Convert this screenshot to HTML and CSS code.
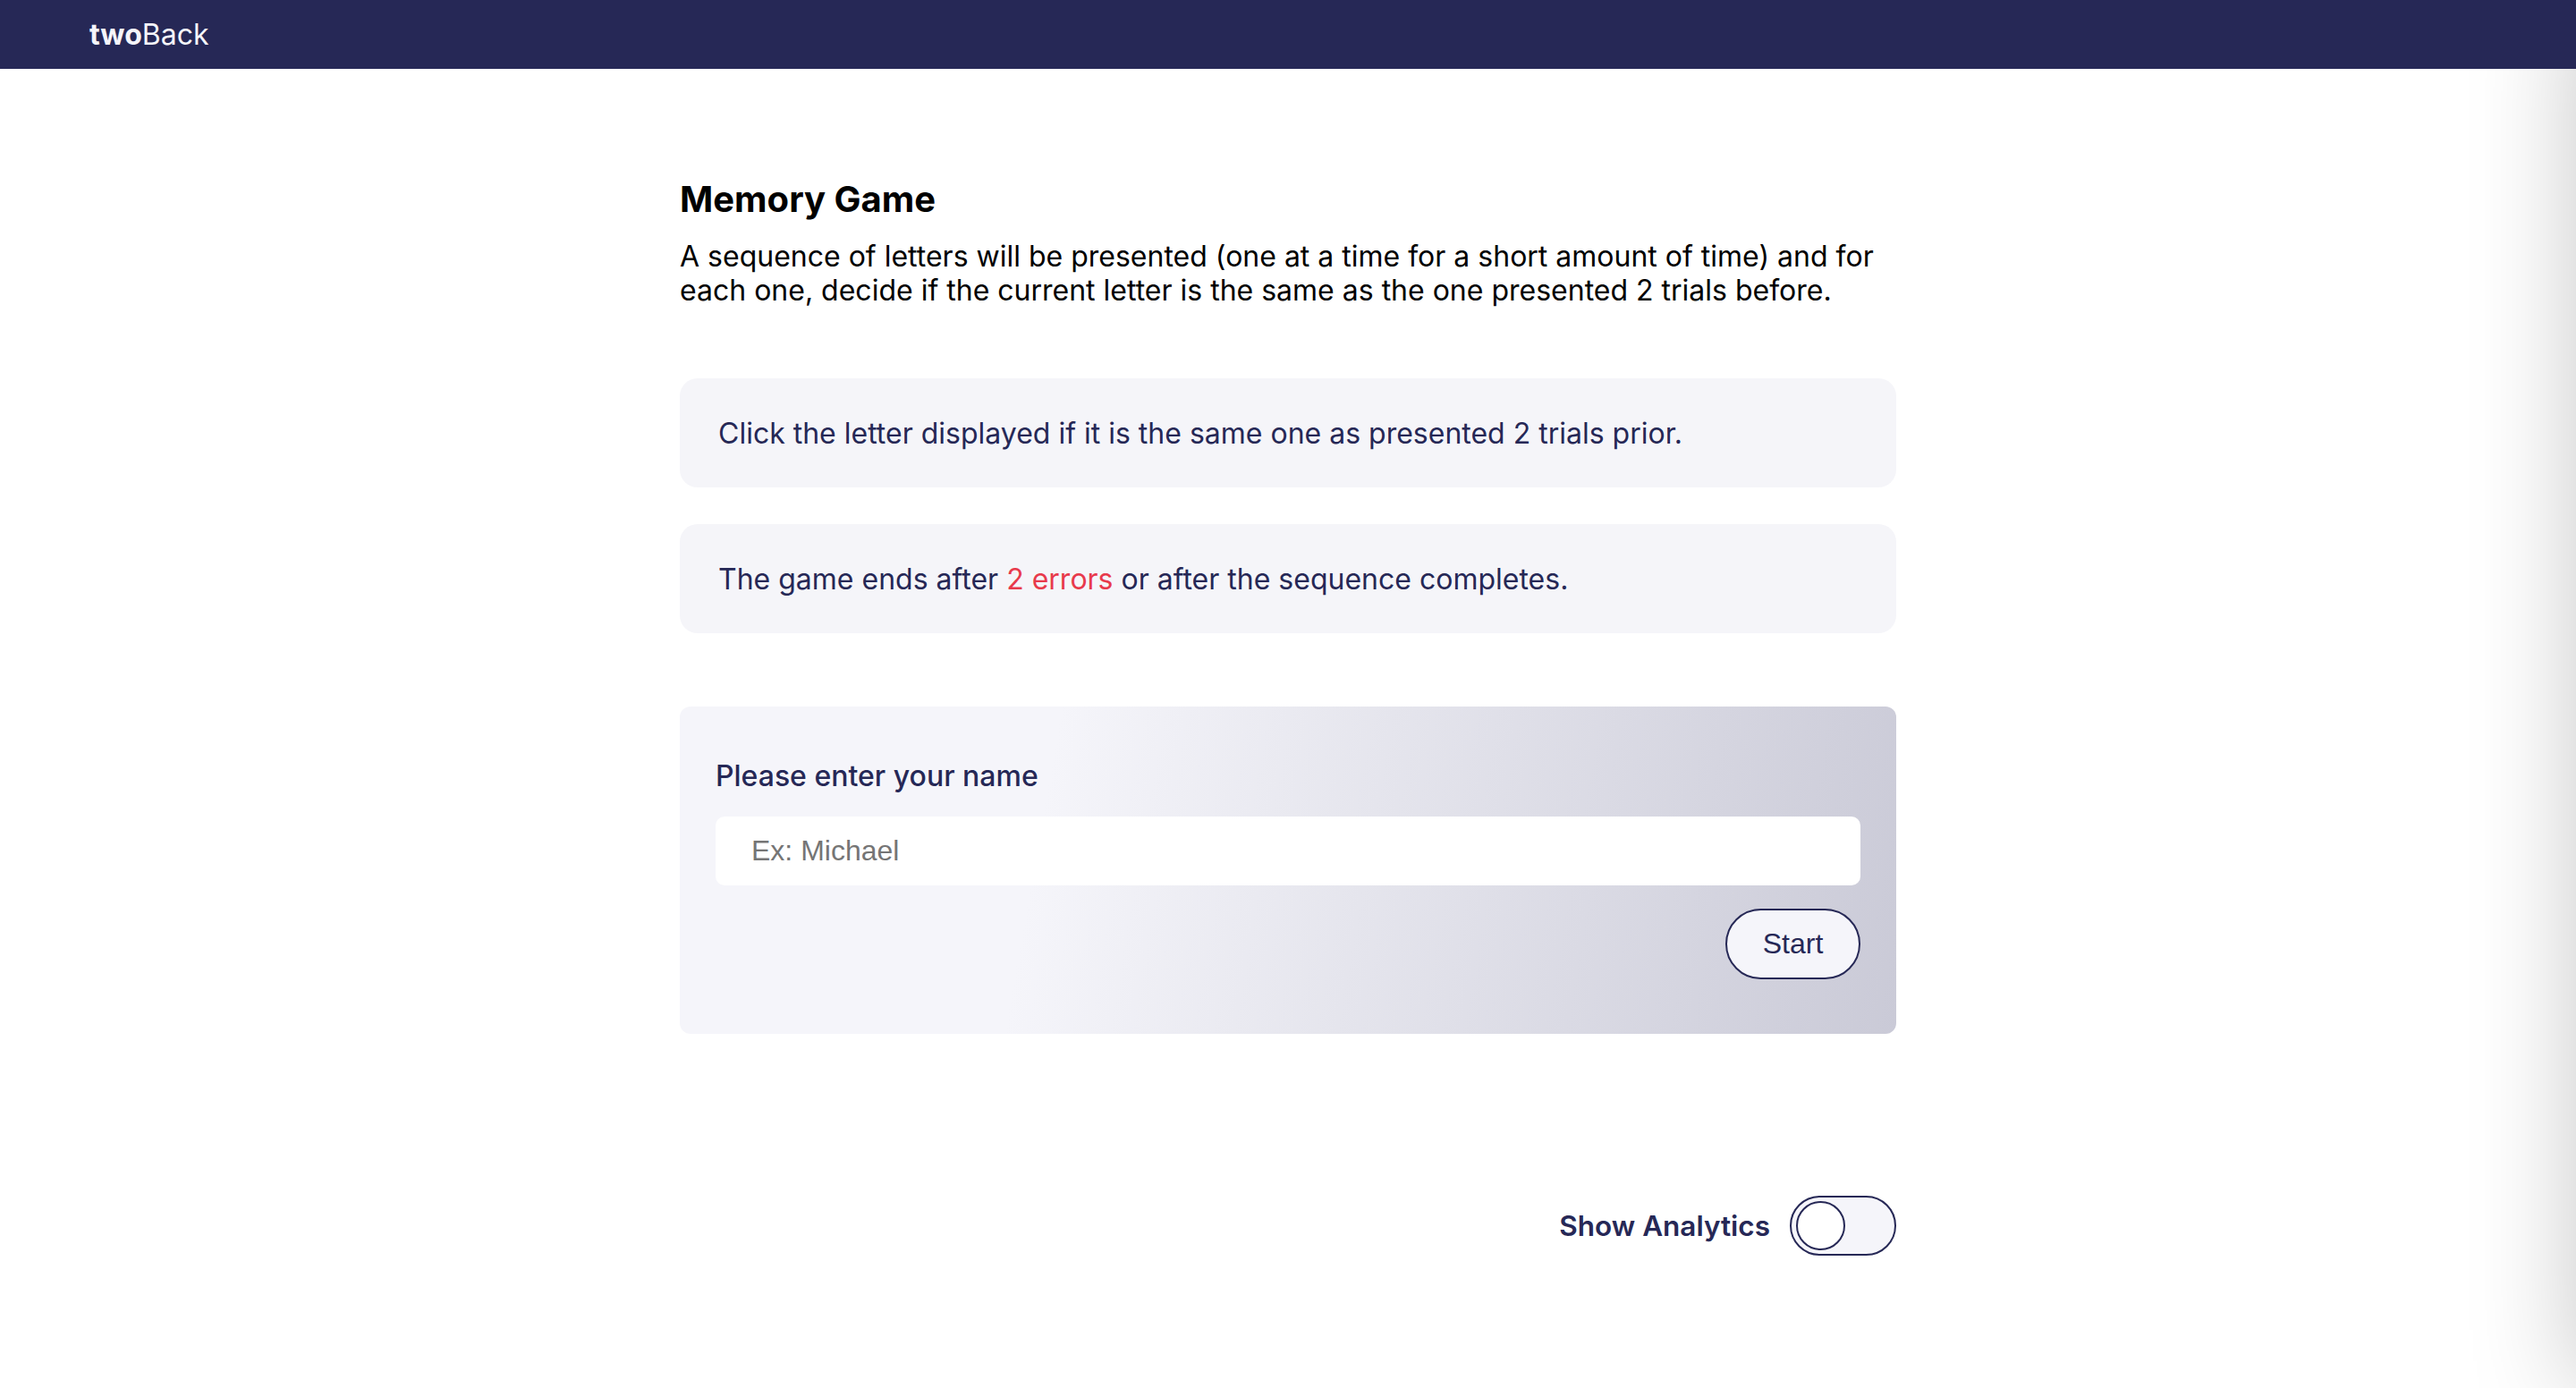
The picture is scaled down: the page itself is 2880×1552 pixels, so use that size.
FILE: index.html
```html
<!DOCTYPE html>
<html lang="en">
<head>
<meta charset="utf-8">
<title>twoBack</title>
<link rel="stylesheet" href="styles.css">
</head>
<body>
<header class="topbar">
  <div class="logo"><span class="logo-bold">two</span>Back</div>
</header>
<main class="container">
  <h1 class="title">Memory Game</h1>
  <p class="intro">A sequence of letters will be presented (one at a time for a short amount of time) and for each one, decide if the current letter is the same as the one presented 2 trials before.</p>
  <div class="note">Click the letter displayed if it is the same one as presented 2 trials prior.</div>
  <div class="note">The game ends after <span class="danger">2 errors</span> or after the sequence completes.</div>
  <form class="name-card">
    <label class="name-label" for="name">Please enter your name</label>
    <input id="name" class="name-input" type="text" placeholder="Ex: Michael">
    <div class="actions"><button class="start-btn" type="button">Start</button></div>
  </form>
  <div class="analytics">
    <span class="analytics-label">Show Analytics</span>
    <span class="toggle"><span class="knob"></span></span>
  </div>
</main>
<div class="side-shadow"></div>
</body>
</html>
```
FILE: styles.css
```css
html, body {
  margin: 0;
  padding: 0;
  background: #ffffff;
  overflow: hidden;
}
body {
  font-family: "Inter", "Noto Sans", sans-serif;
  color: #262856;
  min-height: 100vh;
}
.topbar {
  position: relative;
  z-index: 2;
  height: 77px;
  background: #262856;
  display: flex;
  align-items: center;
  padding-left: 100px;
}
.logo {
  font-size: 32px;
  color: #f5f5fa;
  font-weight: 400;
  letter-spacing: 0;
}
.logo-bold {
  font-weight: 700;
}
.container {
  width: 1360px;
  margin: 0 auto;
  padding-top: 122px;
  display: flex;
  flex-direction: column;
}
.title {
  margin: 0;
  font-size: 40px;
  line-height: 48px;
  font-weight: 700;
  color: #000000;
}
.intro {
  margin: 21px 0 0;
  font-size: 32px;
  line-height: 38px;
  color: #000000;
}
.note {
  margin-top: 41px;
  background: #f5f5f9;
  border-radius: 20px;
  padding: 37px 43px 36px;
  font-size: 32px;
  line-height: 49px;
  color: #262856;
}
.intro + .note {
  margin-top: 79px;
}
.danger {
  color: #e83a4c;
}
.name-card {
  margin-top: 82px;
  border-radius: 12px;
  background: linear-gradient(100deg, #f5f5fa 30%, #cacad7 100%);
  padding: 54px 40px 61px 40px;
  display: flex;
  flex-direction: column;
}
.name-label {
  font-size: 32px;
  line-height: 48px;
  font-weight: 500;
  color: #262856;
}
.name-input {
  margin-top: 21px;
  height: 77px;
  box-sizing: border-box;
  border: none;
  border-radius: 10px;
  background: #ffffff;
  padding: 0 40px;
  font-family: "Liberation Sans", Arial, sans-serif;
  font-size: 32px;
  color: #262856;
  outline: none;
}
.name-input::placeholder {
  color: #757575;
}
.actions {
  margin-top: 26px;
  display: flex;
  justify-content: flex-end;
}
.start-btn {
  width: 151px;
  height: 79px;
  box-sizing: border-box;
  border: 2px solid #262856;
  border-radius: 40px;
  background: #f5f5fa;
  color: #262856;
  font-family: "Liberation Sans", Arial, sans-serif;
  font-size: 32px;
  padding: 0;
}
.analytics {
  margin-top: 181px;
  display: flex;
  justify-content: flex-end;
  align-items: center;
  gap: 22px;
}
.analytics-label {
  font-size: 31.5px;
  font-weight: 600;
  color: #262856;
}
.toggle {
  width: 119px;
  height: 67px;
  box-sizing: border-box;
  border: 2px solid #262856;
  border-radius: 34px;
  background: #f5f5fa;
  display: flex;
  align-items: center;
  padding-left: 5px;
}
.knob {
  width: 55px;
  height: 55px;
  box-sizing: border-box;
  border: 2px solid #262856;
  border-radius: 50%;
  background: #ffffff;
}
.side-shadow {
  position: fixed;
  top: 0;
  right: -400px;
  width: 400px;
  height: 100vh;
  box-shadow: 0 0 110px rgba(0, 0, 0, 0.22);
  z-index: 1;
}
```
